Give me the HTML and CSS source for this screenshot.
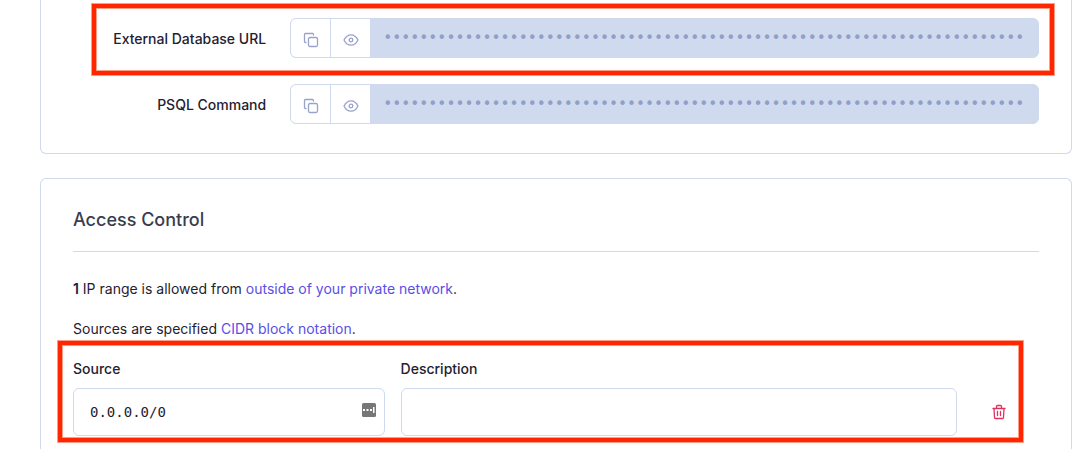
FILE: index.html
```html
<!DOCTYPE html>
<html lang="en">
<head>
  <meta charset="UTF-8" />
  <meta name="viewport" content="width=device-width, initial-scale=1.0"/>
  <title>Database</title>
  <link rel="stylesheet" href="styles.css">
</head>
<body>

  <!-- shared icons -->
  <svg class="icon-defs" aria-hidden="true">
    <symbol id="icon-copy" viewBox="0 0 16 16">
      <rect x="5.5" y="5.5" width="9" height="9" rx="1.5"/>
      <path d="M3 10.5H2.500A1 1 0 0 1 1.500 9.500V2.500A1 1 0 0 1 2.500 1.500h7A1 1 0 0 1 10.500 2.500V3"/>
    </symbol>
    <symbol id="icon-eye" viewBox="0 0 16 16">
      <path d="M1 8C2.800 4.500 5.200 2.800 8 2.800s5.200 1.700 7 5.200c-1.800 3.500-4.200 5.200-7 5.200S2.800 11.500 1 8z"/>
      <circle cx="8" cy="8" r="1.800"/>
    </symbol>
  </svg>

  <section class="panel connections">
    <div class="connection marked">
      <label for="external-url">External Database URL</label>
      <div class="secret">
        <button type="button" aria-label="Copy"><svg class="icon"><use href="#icon-copy"/></svg></button>
        <button type="button" aria-label="Show"><svg class="icon"><use href="#icon-eye"/></svg></button>
        <input id="external-url" type="text" readonly value="•••••••••••••••••••••••••••••••••••••••••••••••••••••••••••••••••••••••">
      </div>
    </div>
    <div class="connection">
      <label for="psql-command">PSQL Command</label>
      <div class="secret">
        <button type="button" aria-label="Copy"><svg class="icon"><use href="#icon-copy"/></svg></button>
        <button type="button" aria-label="Show"><svg class="icon"><use href="#icon-eye"/></svg></button>
        <input id="psql-command" type="text" readonly value="•••••••••••••••••••••••••••••••••••••••••••••••••••••••••••••••••••••••">
      </div>
    </div>
  </section>

  <section class="panel access">
    <h2>Access Control</h2>
    <p><strong>1</strong> IP range is allowed from <a href="#">outside of your private network</a>.</p>
    <p>Sources are specified <a href="#">CIDR block notation</a>.</p>

    <form class="rule marked">
      <div class="field">
        <label for="source">Source</label>
        <div class="input-wrap">
          <input id="source" type="text" value="0.0.0.0/0">
          <!-- password manager badge -->
          <svg class="badge" viewBox="0 0 14 14" aria-hidden="true">
            <rect width="14" height="14" rx="1.500" fill="#777"/>
            <path d="M1 6h2v2h-2zM4.500 6h2v2h-2zM8 6h2v2h-2zM11 4h1.500v6h-1.500z" fill="#fff"/>
          </svg>
        </div>
      </div>
      <div class="field">
        <label for="description">Description</label>
        <input id="description" type="text">
      </div>
      <button class="delete" type="button" aria-label="Delete">
        <svg class="icon" viewBox="0 0 16 16">
          <path d="M2 4.500h12M5.500 4v-1.500a1 1 0 0 1 1-1h3a1 1 0 0 1 1 1v1.500M3 4.500l.5 9a1 1 0 0 0 1 1h7a1 1 0 0 0 1-1l.5-9M6.500 7.500v4M9.500 7.500v4"/>
        </svg>
      </button>
    </form>
  </section>

</body>
</html>
```

FILE: styles.css
```css
* {
  box-sizing: border-box;
}

body {
  margin: 0;
  height: 100vh;
  padding: 0 5px 0 40px;
  display: flex;
  flex-direction: column;
  gap: 24px;
  overflow: hidden;
  font-family: Inter, "Liberation Sans", sans-serif;
  font-size: 14px;
  line-height: 20px;
  color: #1f2130;
  background: #fff;
}

button,
input {
  font: inherit;
  color: inherit;
}

button {
  cursor: pointer;
}

label {
  font-weight: 500;
}

a {
  color: #5a4ee5;
  text-decoration: none;
}

.icon-defs {
  position: absolute;
  width: 0;
  height: 0;
}

.icon {
  display: block;
  width: 16px;
  height: 16px;
  fill: none;
  stroke: currentColor;
  stroke-width: 1.3;
  stroke-linecap: round;
  stroke-linejoin: round;
}

.panel {
  padding: 0 32px;
  border: 1px solid #cfdaee;
}

/* red frame drawn round a row */
.marked {
  position: relative;
}
.marked::after {
  content: "";
  position: absolute;
  inset: -14px -15px -17px 19px;
  border: 4px solid #ff2600;
  box-shadow: 0 0 0 1px #ff9c88, inset 0 0 0 1px #ff9c88;
  pointer-events: none;
}

/* connection strings */
.connections {
  display: flex;
  flex-direction: column;
  gap: 26px;
  padding-top: 18px;
  padding-bottom: 29px;
  border-top: none;
  border-radius: 0 0 6px 6px;
}
.connection {
  display: grid;
  grid-template-columns: 20% 1fr;
  column-gap: 24px;
  align-items: center;
}
.connection label {
  padding-top: 2px;
  text-align: right;
}
.secret {
  display: flex;
  height: 40px;
  border: 1px solid #cfdaee;
  border-radius: 6px;
  background: #cfdaee;
  overflow: hidden;
}
.secret button {
  width: 40px;
  padding: 4px 0 0;
  display: flex;
  align-items: center;
  justify-content: center;
  border: none;
  border-right: 1px solid #cfdaee;
  background: #fff;
  color: #98a3cc;
}
.secret input {
  flex: 1;
  min-width: 0;
  padding: 0 12px;
  border: none;
  outline: none;
  background: none;
  font-family: "DejaVu Sans Mono", monospace;
  font-size: 15px;
  color: #929fc8;
}

/* access control */
.access {
  flex: 1;
  padding-top: 29px;
  border-bottom: none;
  border-radius: 6px 6px 0 0;
}
.access h2 {
  margin: 0 0 27px;
  padding-bottom: 19px;
  border-bottom: 1px solid #cfdaee;
  font-size: 18px;
  font-weight: 500;
  line-height: 24px;
  color: #3a3c50;
}
.access p {
  margin: 0 0 20px;
}
.access strong {
  font-weight: 600;
}

.rule {
  display: grid;
  grid-template-columns: 14fr 25fr 66px;
  gap: 16px;
  align-items: end;
}
.rule::after {
  inset: -18px 16px -6px -15px;
}
.field {
  display: flex;
  flex-direction: column;
  gap: 9px;
}
.field input {
  width: 100%;
  height: 48px;
  padding: 0 16px;
  border: 1px solid #cfdaee;
  border-radius: 6px;
  background: #fff;
  font-family: "DejaVu Sans Mono", monospace;
}
.input-wrap {
  position: relative;
  display: flex;
}
.badge {
  position: absolute;
  top: 15px;
  right: 9px;
  width: 14px;
  height: 14px;
}
.delete {
  height: 48px;
  padding: 0 14px 0 0;
  display: flex;
  align-items: center;
  justify-content: center;
  border: none;
  background: none;
  color: #e0335f;
}
```
